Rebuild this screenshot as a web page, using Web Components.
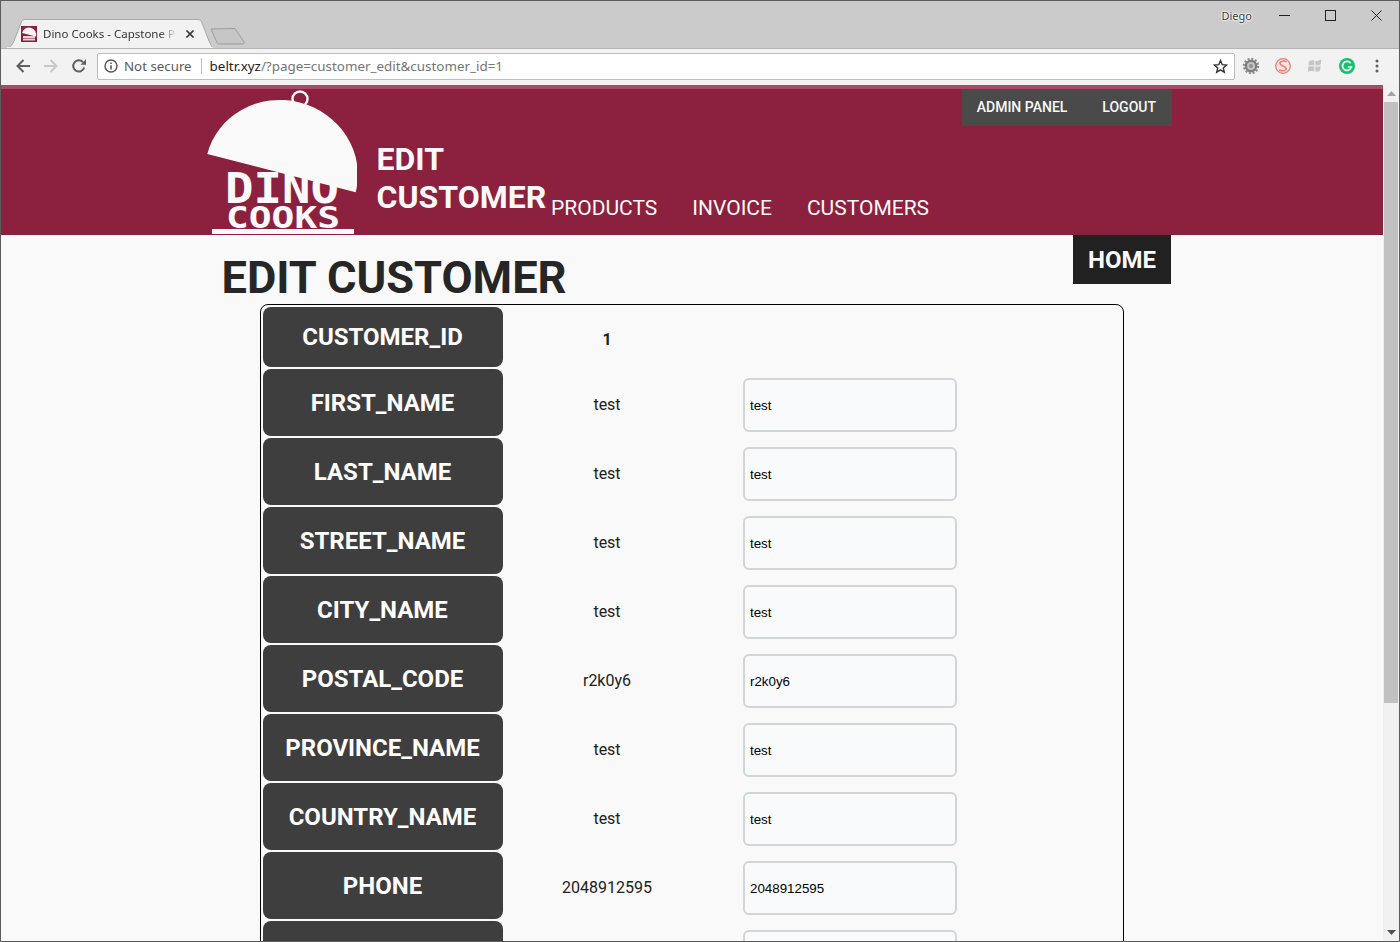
<!DOCTYPE html>
<html lang="en">
<head>
<meta charset="utf-8">
<title>Dino Cooks - Capstone Project</title>
<style>
  html, body { margin: 0; height: 100%; overflow: hidden; background: #f9f9f9; }
</style>
</head>
<body>
<browser-window>
  <site-header title-text="EDIT CUSTOMER"></site-header>
  <customer-page>
    <customer-row label="CUSTOMER_ID" value="1" readonly></customer-row>
    <customer-row label="FIRST_NAME" value="test"></customer-row>
    <customer-row label="LAST_NAME" value="test"></customer-row>
    <customer-row label="STREET_NAME" value="test"></customer-row>
    <customer-row label="CITY_NAME" value="test"></customer-row>
    <customer-row label="POSTAL_CODE" value="r2k0y6"></customer-row>
    <customer-row label="PROVINCE_NAME" value="test"></customer-row>
    <customer-row label="COUNTRY_NAME" value="test"></customer-row>
    <customer-row label="PHONE" value="2048912595"></customer-row>
    <customer-row></customer-row>
  </customer-page>
</browser-window>

<script>
class BrowserWindow extends HTMLElement {
  connectedCallback() {
    this.attachShadow({ mode: 'open' });
    this.shadowRoot.innerHTML = `
      <style>
        :host {
          display: flex;
          flex-direction: column;
          box-sizing: border-box;
          width: 1400px;
          height: 942px;
          border: 1px solid #5c5c5c;
          overflow: hidden;
          font-family: "Noto Sans", "Liberation Sans", sans-serif;
        }
        .titlebar {
          flex: none;
          height: 47px;
          background: #cbcbcb;
          display: flex;
          align-items: flex-end;
          position: relative;
        }
        .tab {
          position: relative;
          width: 206px;
          height: 29px;
          margin-left: 6px;
          display: flex;
          align-items: center;
          flex: none;
        }
        .tab > svg.shape { position: absolute; left: 0; top: 0; }
        .fav { position: relative; margin-left: 14px; flex: none; }
        .tab-title {
          position: relative;
          margin-left: 6px;
          width: 132px;
          font-size: 11.5px;
          color: #333;
          white-space: nowrap;
          -webkit-mask-image: linear-gradient(90deg, #000 88%, rgba(0,0,0,.15));
          mask-image: linear-gradient(90deg, #000 88%, rgba(0,0,0,.15));
        }
        .tab-close { position: relative; margin-left: 10px; flex: none; }
        .newtab { flex: none; margin: 0 0 3px -3px; }
        .win {
          margin-left: auto;
          align-self: flex-start;
          display: flex;
          align-items: center;
          height: 28px;
        }
        .user {
          font-size: 11px;
          color: #3a3a3a;
          text-shadow: 0 0 1px #fff, 0 0 2px #fff, 0 0 2px #fff, 0 0 3px #fff;
          margin-right: 27px;
          margin-left: -1px;
        }
        .win svg { display: block; }
        .win .min { margin-right: 35px; }
        .win .max { margin-right: 35px; }
        .win .close { margin-right: 17px; }
        .toolbar {
          flex: none;
          height: 37px;
          padding-bottom: 2px;
          background: #f2f2f2;
          border-top: 1px solid #b4b4b4;
          box-sizing: border-box;
          display: flex;
          align-items: center;
        }
        .toolbar svg { display: block; flex: none; }
        .nav-btn { margin-left: 14px; }
        .nav-btn + .nav-btn { margin-left: 12px; }
        .omni {
          flex: none;
          box-sizing: border-box;
          width: 1138px;
          height: 27px;
          margin-left: 10px;
          background: #fff;
          border: 1px solid #bdbdbd;
          border-radius: 2px;
          display: flex;
          align-items: center;
          font-size: 13.4px;
          color: #757575;
          white-space: nowrap;
        }
        .omni .info { margin-left: 6px; }
        .omni .secure { margin-left: 6px; color: #5a5a5a; font-size: 13.3px; }
        .omni .sep { width: 1px; height: 16px; background: #bbb; margin: 0 8px 0 9px; }
        .omni b { font-weight: 400; color: #222; }
        .omni .star { margin-left: auto; margin-right: 6px; }
        .ext { margin-left: 7px; }
        .ext + .ext { margin-left: 14px; }
        .dots { margin-left: 19px; }
        .view { flex: 1; min-height: 0; display: flex; }
        .page { flex: 1; min-width: 0; background: #f9f9f9; overflow: hidden; }
        .scrollbar {
          flex: none;
          width: 16px;
          background: #f1f1f1;
          display: flex;
          flex-direction: column;
          align-items: center;
        }
        .arrow { flex: none; height: 17px; display: flex; align-items: center; justify-content: center; }
        .track { flex: 1; width: 100%; }
        .thumb { width: 14px; margin: 0 auto; height: 601px; background: #c1c1c1; }
      </style>
      <div class="titlebar">
        <div class="tab">
          <svg class="shape" width="206" height="29" viewBox="0 0 206 29">
            <path d="M0 29 C4 28 5 26 7 22 L14 4 C15 1 16 0.5 19 0.5 L190 0.5 C193 0.5 194 1 195 4 L202 22 C204 26 205 28 206 29 Z" fill="#f2f2f2" stroke="#a8a8a8"/>
            <rect x="0" y="28" width="206" height="2" fill="#f2f2f2"/>
          </svg>
          <svg class="fav" width="16" height="16" viewBox="0 0 16 16">
            <rect width="16" height="16" fill="#8b213f"/>
            <path d="M1 7 A7 7 0 0 1 15 10.5 Z" fill="#f4f4f4"/>
            <rect x="2" y="10" width="12" height="2" fill="#e8cfd6"/>
            <rect x="2" y="12.5" width="12" height="2" fill="#e8cfd6"/>
          </svg>
          <span class="tab-title">Dino Cooks - Capstone P</span>
          <svg class="tab-close" width="10" height="10" viewBox="0 0 10 10">
            <path d="M1.5 1.5 L8.5 8.5 M8.5 1.5 L1.5 8.5" stroke="#333" stroke-width="1.7"/>
          </svg>
        </div>
        <svg class="newtab" width="36" height="18" viewBox="0 0 36 18">
          <path d="M1 2 L24 1.5 Q25.5 1.5 26 3 L34 15 Q34.5 17 33 17 L9 17 Q7.5 17 7 15.5 Z" fill="#c6c6c6" stroke="#9c9c9c"/>
        </svg>
        <div class="win">
          <span class="user">Diego</span>
          <svg class="min" width="11" height="11" viewBox="0 0 11 11"><path d="M0 5.5 H11" stroke="#222"/></svg>
          <svg class="max" width="11" height="11" viewBox="0 0 11 11"><rect x="0.5" y="0.5" width="10" height="10" fill="none" stroke="#222"/></svg>
          <svg class="close" width="11" height="11" viewBox="0 0 11 11"><path d="M0.5 0.5 L10.5 10.5 M10.5 0.5 L0.5 10.5" stroke="#222"/></svg>
        </div>
      </div>
      <div class="toolbar">
        <svg class="nav-btn" width="16" height="16" viewBox="0 0 16 16">
          <path d="M15 8 H3 M8.5 2 L2.5 8 L8.5 14" fill="none" stroke="#5f5f5f" stroke-width="2"/>
        </svg>
        <svg class="nav-btn" width="16" height="16" viewBox="0 0 16 16">
          <path d="M1 8 H13 M7.5 2 L13.5 8 L7.5 14" fill="none" stroke="#c8c8c8" stroke-width="2"/>
        </svg>
        <svg class="nav-btn" width="16" height="16" viewBox="0 0 16 16">
          <path d="M13.2 9.5 A5.6 5.6 0 1 1 12 4.2" fill="none" stroke="#5f5f5f" stroke-width="2"/>
          <path d="M9.5 6.8 H15 V1.3 Z" fill="#5f5f5f"/>
        </svg>
        <div class="omni">
          <svg class="info" width="14" height="14" viewBox="0 0 14 14">
            <circle cx="7" cy="7" r="6" fill="none" stroke="#555" stroke-width="1.4"/>
            <path d="M7 6.2 V10.4 M7 3.6 V5" stroke="#555" stroke-width="1.6"/>
          </svg>
          <span class="secure">Not secure</span>
          <span class="sep"></span>
          <span><b>beltr.xyz</b>/?page=customer_edit&amp;customer_id=1</span>
          <svg class="star" width="15" height="15" viewBox="0 0 15 15">
            <path d="M7.5 1.6 L9.2 5.6 L13.6 6 L10.3 8.9 L11.3 13.2 L7.5 10.9 L3.7 13.2 L4.7 8.9 L1.4 6 L5.8 5.6 Z" fill="none" stroke="#333" stroke-width="1.4"/>
          </svg>
        </div>
        <svg class="ext" width="18" height="18" viewBox="0 0 18 18">
          <circle cx="9" cy="9" r="6.3" fill="#7d7d7d"/>
          <circle cx="9" cy="9" r="7" fill="none" stroke="#8a8a8a" stroke-width="2.4" stroke-dasharray="2 1.67"/>
          <circle cx="9" cy="9" r="4" fill="#c4c4c4"/>
          <circle cx="9" cy="9" r="2" fill="#909090"/>
        </svg>
        <svg class="ext" width="18" height="18" viewBox="0 0 18 18">
          <circle cx="9" cy="9" r="7.3" fill="#f8e4e0" stroke="#e77f74" stroke-width="1.3"/>
          <path d="M12.5 4.8 C9 3.2 5.4 4.6 6 6.8 C6.6 9 11.8 9 12.2 11.4 C12.6 13.6 8.5 14.6 5.2 13" fill="none" stroke="#e77f74" stroke-width="1.5"/>
        </svg>
        <svg class="ext" width="18" height="18" viewBox="0 0 18 18">
          <path d="M3 4 Q6 2.5 8.4 3.6 V8.4 Q6 7.4 2.4 8.6 Z M9.4 3.8 Q12 4.6 15.4 2.6 L14.8 7.6 Q12 9 9.4 8.4 Z M2.3 9.6 Q6 8.4 8.4 9.4 V14.6 Q5.6 13.4 1.8 14.8 Z M9.4 9.4 Q12 10 14.7 8.7 L14 13.8 Q12 15 9.4 14.6 Z" fill="#c4c8c4"/>
        </svg>
        <svg class="ext" width="18" height="18" viewBox="0 0 18 18">
          <circle cx="9" cy="9" r="8" fill="#15c26b"/>
          <path d="M12.6 6.2 A4.5 4.5 0 1 0 13.4 10 H9.8" fill="none" stroke="#fff" stroke-width="1.7"/>
        </svg>
        <svg class="dots" width="4" height="14" viewBox="0 0 4 14">
          <circle cx="2" cy="2" r="1.5" fill="#5f5f5f"/>
          <circle cx="2" cy="7" r="1.5" fill="#5f5f5f"/>
          <circle cx="2" cy="12" r="1.5" fill="#5f5f5f"/>
        </svg>
      </div>
      <div class="view">
        <div class="page"><slot></slot></div>
        <div class="scrollbar">
          <div class="arrow"><svg width="9" height="5" viewBox="0 0 9 5"><path d="M4.5 0 L9 5 H0 Z" fill="#a3a3a3"/></svg></div>
          <div class="track"><div class="thumb"></div></div>
          <div class="arrow"><svg width="9" height="5" viewBox="0 0 9 5"><path d="M0 0 H9 L4.5 5 Z" fill="#505050"/></svg></div>
        </div>
      </div>
    `;
  }
}

class SiteHeader extends HTMLElement {
  connectedCallback() {
    this.attachShadow({ mode: 'open' });
    this.shadowRoot.innerHTML = `
      <style>
        :host {
          display: block;
          box-sizing: border-box;
          height: 150px;
          background: #8b213f;
          border-top: 4px solid #a94a68;
          font-family: Roboto, "Liberation Sans", sans-serif;
          color: #f9f9f9;
        }
        .inner {
          width: 965px;
          height: 146px;
          margin-left: 206px;
          display: flex;
        }
        .logo { flex: none; display: block; }
        .logo text { fill: #f9f9f9; font-family: "DejaVu Sans Mono", "Liberation Mono", monospace; font-weight: 700; }
        h2 {
          flex: none;
          width: 174.5px;
          margin: 51px 0 0 19.5px;
          font-size: 32px;
          line-height: 38px;
          font-weight: 700;
        }
        nav {
          flex: none;
          align-self: flex-end;
          display: flex;
          gap: 35px;
          padding-bottom: 14px;
          font-size: 21px;
          line-height: 26px;
        }
        .admin {
          margin-left: auto;
          align-self: flex-start;
          display: flex;
          gap: 35px;
          height: 37px;
          padding: 0 16px 2px 15px;
          box-sizing: border-box;
          align-items: center;
          background: #4a4a4a;
          font-size: 14px;
          font-weight: 500;
        }
      </style>
      <div class="inner">
        <svg class="logo" width="150" height="146" viewBox="207 89 150 146">
          <text x="225" y="203" font-size="42" textLength="114" lengthAdjust="spacingAndGlyphs">DINO</text>
          <text x="226" y="228" font-size="30" textLength="114" lengthAdjust="spacingAndGlyphs">COOKS</text>
          <rect x="212" y="229" width="142" height="5" fill="#f9f9f9"/>
          <circle cx="300" cy="99" r="7.5" fill="none" stroke="#f9f9f9" stroke-width="2.4"/>
          <path d="M207.3 154 A76.6 73 14.5 0 1 355.7 192.3 Z" fill="#f9f9f9"/>
        </svg>
        <h2>${this.getAttribute('title-text')}</h2>
        <nav><span>PRODUCTS</span><span>INVOICE</span><span>CUSTOMERS</span></nav>
        <div class="admin"><span>ADMIN PANEL</span><span>LOGOUT</span></div>
      </div>
    `;
  }
}

class CustomerPage extends HTMLElement {
  connectedCallback() {
    this.attachShadow({ mode: 'open' });
    this.shadowRoot.innerHTML = `
      <style>
        :host {
          display: block;
          width: 965px;
          margin-left: 206px;
          font-family: Roboto, "Liberation Sans", sans-serif;
        }
        .top { display: flex; justify-content: space-between; align-items: flex-start; height: 69px; }
        h1 {
          margin: 18px 0 0 14.5px;
          font-size: 45.2px;
          line-height: 50px;
          font-weight: 700;
          color: #262626;
        }
        .home {
          width: 98px;
          height: 49px;
          margin-right: 1px;
          display: flex;
          align-items: center;
          justify-content: center;
          background: #212121;
          color: #f9f9f9;
          font-size: 24px;
          font-weight: 700;
        }
        .card {
          box-sizing: border-box;
          width: 864px;
          margin-left: 53px;
          padding: 2px 2px 40px;
          border: 1px solid #000;
          border-radius: 8px;
          display: flex;
          flex-direction: column;
          gap: 2px;
        }
      </style>
      <div class="top">
        <h1>EDIT CUSTOMER</h1>
        <div class="home">HOME</div>
      </div>
      <div class="card"><slot></slot></div>
    `;
  }
}

class CustomerRow extends HTMLElement {
  connectedCallback() {
    const label = this.getAttribute('label') || '';
    const value = this.getAttribute('value') || '';
    const readonly = this.hasAttribute('readonly');
    this.attachShadow({ mode: 'open' });
    this.shadowRoot.innerHTML = `
      <style>
        :host {
          display: grid;
          grid-template-columns: 240px 204px 1fr;
          gap: 2px;
          min-height: ${readonly ? 60 : 67}px;
          color: #212121;
          font-size: 16px;
        }
        .label {
          display: flex;
          align-items: center;
          justify-content: center;
          background: #3e3e3e;
          border-radius: 8px;
          color: #fff;
          font-size: 24px;
          font-weight: 700;
          padding-right: 1px;
          padding-top: ${readonly ? 0 : 1}px;
          box-sizing: border-box;
        }
        .value { display: flex; align-items: center; justify-content: center; padding-top: ${readonly ? 4 : 3}px; }
        .value.ro { font-weight: 700; }
        input {
          box-sizing: border-box;
          display: block;
          width: 214px;
          height: 54px;
          margin: 9px 0 4px 32px;
          padding: 0 5px;
          background: #f9fafb;
          border: 2px solid #d0d6d6;
          border-radius: 6px;
          font: 13.33px "Liberation Sans", Arial, sans-serif;
          color: #000;
        }
      </style>
      <div class="label">${label}</div>
      <div class="value${readonly ? ' ro' : ''}">${value}</div>
      <div>${readonly ? '' : `<input type="text" value="${value}">`}</div>
    `;
  }
}

customElements.define('browser-window', BrowserWindow);
customElements.define('site-header', SiteHeader);
customElements.define('customer-page', CustomerPage);
customElements.define('customer-row', CustomerRow);
</script>
</body>
</html>
